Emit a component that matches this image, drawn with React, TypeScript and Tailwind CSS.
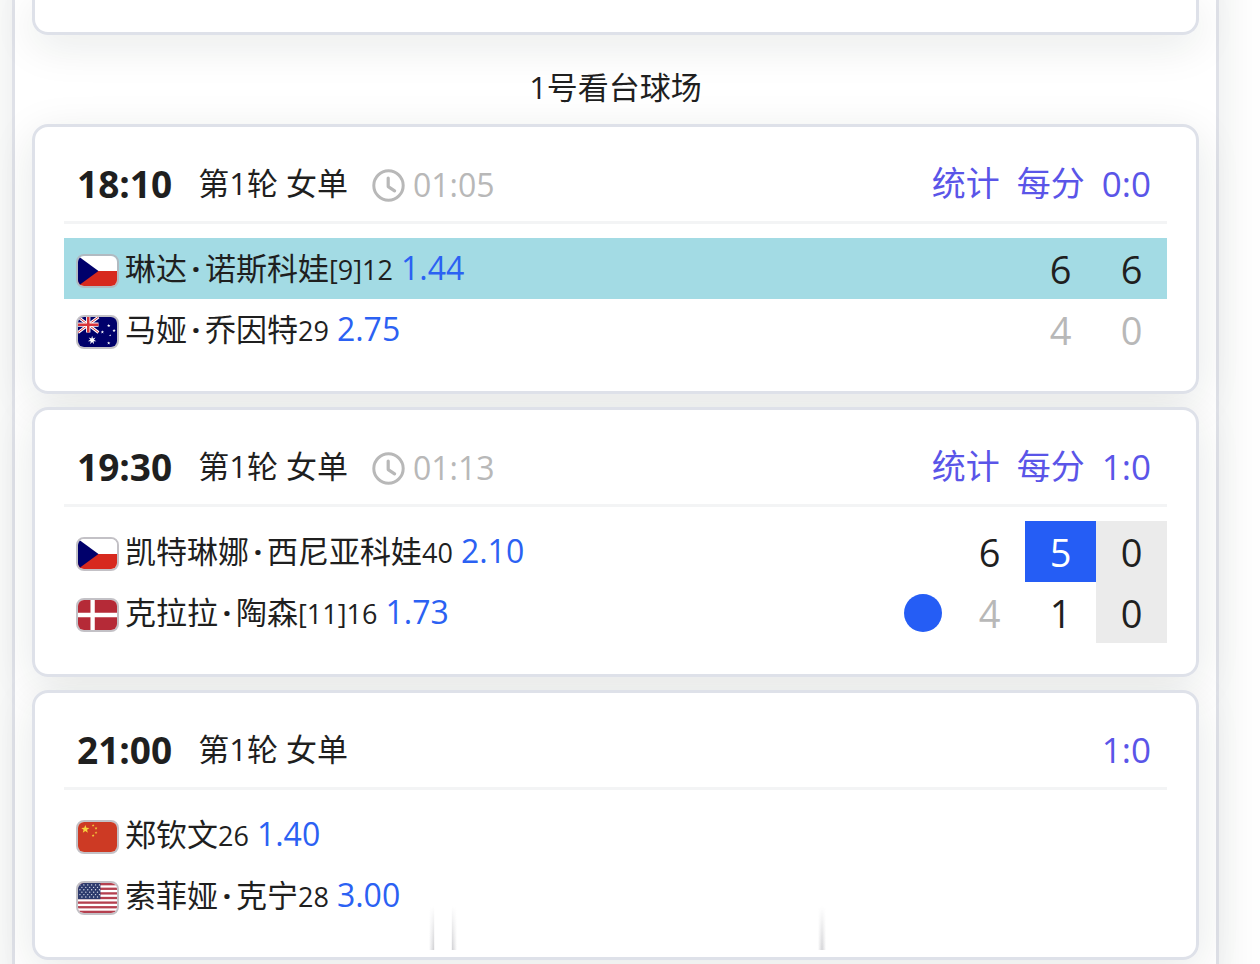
import React from 'react';
import clsx from 'clsx';

type Country = 'cz' | 'au' | 'dk' | 'cn' | 'us';

interface Score {
  value: string;
  tone?: 'normal' | 'lost' | 'active' | 'point';
}

interface Player {
  name: string;
  country: Country;
  rank: string;
  odds: string;
  winner?: boolean;
  serving?: boolean;
  scores: Score[];
}

interface Match {
  time: string;
  round: string;
  duration?: string;
  links: string[];
  players: Player[];
}

const matches: Match[] = [
  {
    time: '18:10',
    round: '第1轮 女单',
    duration: '01:05',
    links: ['统计', '每分', '0:0'],
    players: [
      {
        name: '琳达·诺斯科娃',
        country: 'cz',
        rank: '[9]12',
        odds: '1.44',
        winner: true,
        scores: [{ value: '6' }, { value: '6' }]
      },
      {
        name: '马娅·乔因特',
        country: 'au',
        rank: '29',
        odds: '2.75',
        scores: [{ value: '4', tone: 'lost' }, { value: '0', tone: 'lost' }]
      }
    ]
  },
  {
    time: '19:30',
    round: '第1轮 女单',
    duration: '01:13',
    links: ['统计', '每分', '1:0'],
    players: [
      {
        name: '凯特琳娜·西尼亚科娃',
        country: 'cz',
        rank: '40',
        odds: '2.10',
        scores: [{ value: '6' }, { value: '5', tone: 'active' }, { value: '0', tone: 'point' }]
      },
      {
        name: '克拉拉·陶森',
        country: 'dk',
        rank: '[11]16',
        odds: '1.73',
        serving: true,
        scores: [{ value: '4', tone: 'lost' }, { value: '1' }, { value: '0', tone: 'point' }]
      }
    ]
  },
  {
    time: '21:00',
    round: '第1轮 女单',
    links: ['1:0'],
    players: [
      { name: '郑钦文', country: 'cn', rank: '26', odds: '1.40', scores: [] },
      { name: '索菲娅·克宁', country: 'us', rank: '28', odds: '3.00', scores: [] }
    ]
  }
];

const starPoints = (cx: number, cy: number, r: number, tips = 5) =>
  Array.from({ length: tips * 2 }, (_, i) => {
    const radius = i % 2 === 0 ? r : r * 0.42;
    const angle = (Math.PI * i) / tips - Math.PI / 2;
    return `${(cx + radius * Math.cos(angle)).toFixed(2)},${(cy + radius * Math.sin(angle)).toFixed(2)}`;
  }).join(' ');

const flagArt: Record<Country, React.ReactNode> = {
  cz: (
    <>
      <rect width="40" height="31" fill="#fff" />
      <rect y="15.5" width="40" height="15.5" fill="#d7291e" />
      <path d="M0 0 21 15.5 0 31z" fill="#00006b" />
    </>
  ),
  au: (
    <>
      <rect width="40" height="31" fill="#00006b" />
      <path d="M0 0 21 16M21 0 0 16" stroke="#fff" strokeWidth="3" />
      <path d="M0 0 21 16M21 0 0 16" stroke="#d8343a" strokeWidth="1" />
      <path d="M10.5 0v16M0 8h21" stroke="#fff" strokeWidth="4.4" />
      <path d="M10.5 0v16M0 8h21" stroke="#d8343a" strokeWidth="2.6" />
      <polygon points={starPoints(14.5, 24, 4.5, 7)} fill="#fff" />
      <polygon points={starPoints(31.5, 9, 1.8)} fill="#fff" />
      <polygon points={starPoints(25, 15.5, 1.8)} fill="#fff" />
      <polygon points={starPoints(37, 14, 1.8)} fill="#fff" />
      <polygon points={starPoints(33, 19, 1.2)} fill="#fff" />
      <polygon points={starPoints(31.5, 27, 1.8)} fill="#fff" />
    </>
  ),
  dk: (
    <>
      <rect width="40" height="31" fill="#b52a37" />
      <path d="M15 0v31M0 15.5h40" stroke="#fff" strokeWidth="4.4" />
    </>
  ),
  cn: (
    <>
      <rect width="40" height="31" fill="#cd3a24" />
      <polygon points={starPoints(7.5, 7.5, 4.4)} fill="#f7d33c" />
      <polygon points={starPoints(15.5, 3.5, 1.5)} fill="#f7d33c" />
      <polygon points={starPoints(18.5, 6.5, 1.5)} fill="#f7d33c" />
      <polygon points={starPoints(18.5, 11, 1.5)} fill="#f7d33c" />
      <polygon points={starPoints(15.5, 14, 1.5)} fill="#f7d33c" />
    </>
  ),
  us: (
    <>
      <rect width="40" height="31" fill="#fff" />
      {[0, 1, 2, 3, 4, 5, 6].map(i => (
        <rect key={i} y={i * 4.77} width="40" height="2.4" fill="#b5404f" />
      ))}
      <rect width="23" height="16.7" fill="#2d3a6d" />
      {Array.from({ length: 33 }, (_, i) => {
        const row = Math.floor(i / 5.5);
        const col = i - Math.ceil(row * 5.5);
        return <circle key={i} cx={2 + col * 4 + (row % 2) * 2} cy={2 + row * 2.5} r="0.7" fill="#dfe3ef" />;
      })}
    </>
  )
};

const Flag: React.FC<{ country: Country }> = ({ country }) => (
  <svg
    viewBox="0 0 40 31"
    preserveAspectRatio="none"
    aria-hidden="true"
    className="mt-1 h-[34px] w-[43px] shrink-0 rounded-lg border-2 border-[#b4b2b8]/80"
  >
    {flagArt[country]}
  </svg>
);

const ClockIcon: React.FC = () => (
  <svg viewBox="0 0 33 33" fill="none" stroke="currentColor" strokeWidth="3" aria-hidden="true" className="mt-1 size-[33px]">
    <circle cx="16.5" cy="16.5" r="14.7" />
    <path d="M16.2 9v8.6l6.4 4.2" strokeWidth="3.2" strokeLinecap="round" strokeLinejoin="round" />
  </svg>
);

// 间隔号占半个汉字宽
const PlayerName: React.FC<{ name: string }> = ({ name }) => {
  const [first, last] = name.split('·');
  return (
    <span className="text-[31px]">
      {first}
      {last && <span className="inline-block w-[18px] text-center font-bold">·</span>}
      {last}
    </span>
  );
};

const ScoreCell: React.FC<{ score: Score }> = ({ score }) => (
  <td
    className={clsx(
      'w-[71px] p-0 text-center text-[38px] leading-[56px]',
      score.tone === 'lost' && 'text-[#b8b8b8]',
      score.tone === 'active' && 'bg-[#255df5] text-white',
      score.tone === 'point' && 'bg-[#ebebeb]'
    )}
  >
    {score.value}
  </td>
);

const PlayerRow: React.FC<{ player: Player }> = ({ player }) => (
  <tr className={clsx('h-[61px]', player.winner && 'bg-[#a3dbe4]')}>
    <th scope="row" className="p-0 text-left font-normal">
      <div className="flex items-center gap-[6px] pl-3">
        <Flag country={player.country} />
        <div className="flex items-baseline leading-[56px]">
          <PlayerName name={player.name} />
          <span className="text-[27px]">{player.rank}</span>
          <span className="ml-2 text-[32px] text-[#2b61f3]">{player.odds}</span>
        </div>
      </div>
    </th>
    <td className="w-[63px] p-0">
      {player.serving && <span role="img" aria-label="发球" className="mx-auto block size-[38px] rounded-full bg-[#255df5]" />}
    </td>
    {player.scores.map((score, i) => (
      <ScoreCell key={i} score={score} />
    ))}
  </tr>
);

const cardFrame =
  "relative border-[3px] border-[#dee1e9] bg-white before:absolute before:-inset-[3px] before:-z-10 before:rounded-2xl before:shadow-[0_10px_44px_rgba(20,40,30,0.1)] before:content-['']";

const MatchCard: React.FC<{ match: Match }> = ({ match }) => (
  <article className={clsx(cardFrame, 'rounded-2xl px-[29px] pt-[18px] pb-[31px]')}>
    <header className="flex h-[79px] items-center justify-between border-b-[3px] border-[#f3f4f5] pr-4 pl-[13px]">
      <div className="flex items-center">
        <time className="text-[37px] font-bold">{match.time}</time>
        <h3 className="ml-[26px] text-[31px]">{match.round}</h3>
        {match.duration && (
          <div className="ml-6 flex items-center gap-2 text-[#b8b8b8]">
            <ClockIcon />
            <span className="mt-1 text-[32px]">{match.duration}</span>
          </div>
        )}
      </div>
      <nav className="flex gap-[17px] text-[34px] text-[#5a55e8]">
        {match.links.map(link => (
          <a key={link} href="#" className={link.includes(':') ? 'text-[35px]' : undefined}>
            {link}
          </a>
        ))}
      </nav>
    </header>
    <table className="mt-[14px] w-full border-collapse">
      <tbody>
        {match.players.map(player => (
          <PlayerRow key={player.name} player={player} />
        ))}
      </tbody>
    </table>
  </article>
);

// 底部浮层残留的淡影
const FadingShadow: React.FC = () => (
  <div aria-hidden="true" className="pointer-events-none absolute bottom-[10px] left-[34%] flex h-11 w-[34%] items-end justify-between">
    <span className="h-full w-7 bg-[linear-gradient(90deg,transparent,#cfcfd2_18%,#fff_20%,#fff_80%,#cfcfd2_82%,transparent)] mask-t-from-0%" />
    <span className="h-full w-2 bg-[linear-gradient(90deg,transparent,#d4d4d7,transparent)] mask-t-from-0%" />
  </div>
);

export default function App() {
  return (
    <div className="overflow-hidden bg-white font-['Open_Sans','Noto_Sans_CJK_SC',sans-serif] leading-none text-[#1f1f1f]">
      <main
        lang="zh-CN"
        className="isolate -my-16 mr-[41px] ml-3 border-x-[3px] border-[#dfe1e8] bg-white px-[17px] pt-16 pb-[68px] shadow-[0_0_44px_rgba(20,40,30,0.1)]"
      >
        <div className={clsx(cardFrame, 'h-[35px] rounded-b-2xl border-t-0')} />
        <h2 className="pt-11 pb-7 text-center text-[31px] leading-[17px]">1号看台球场</h2>
        <div className="relative flex flex-col gap-[13px]">
          {matches.map(match => (
            <MatchCard key={match.time} match={match} />
          ))}
          <FadingShadow />
        </div>
      </main>
    </div>
  );
}
